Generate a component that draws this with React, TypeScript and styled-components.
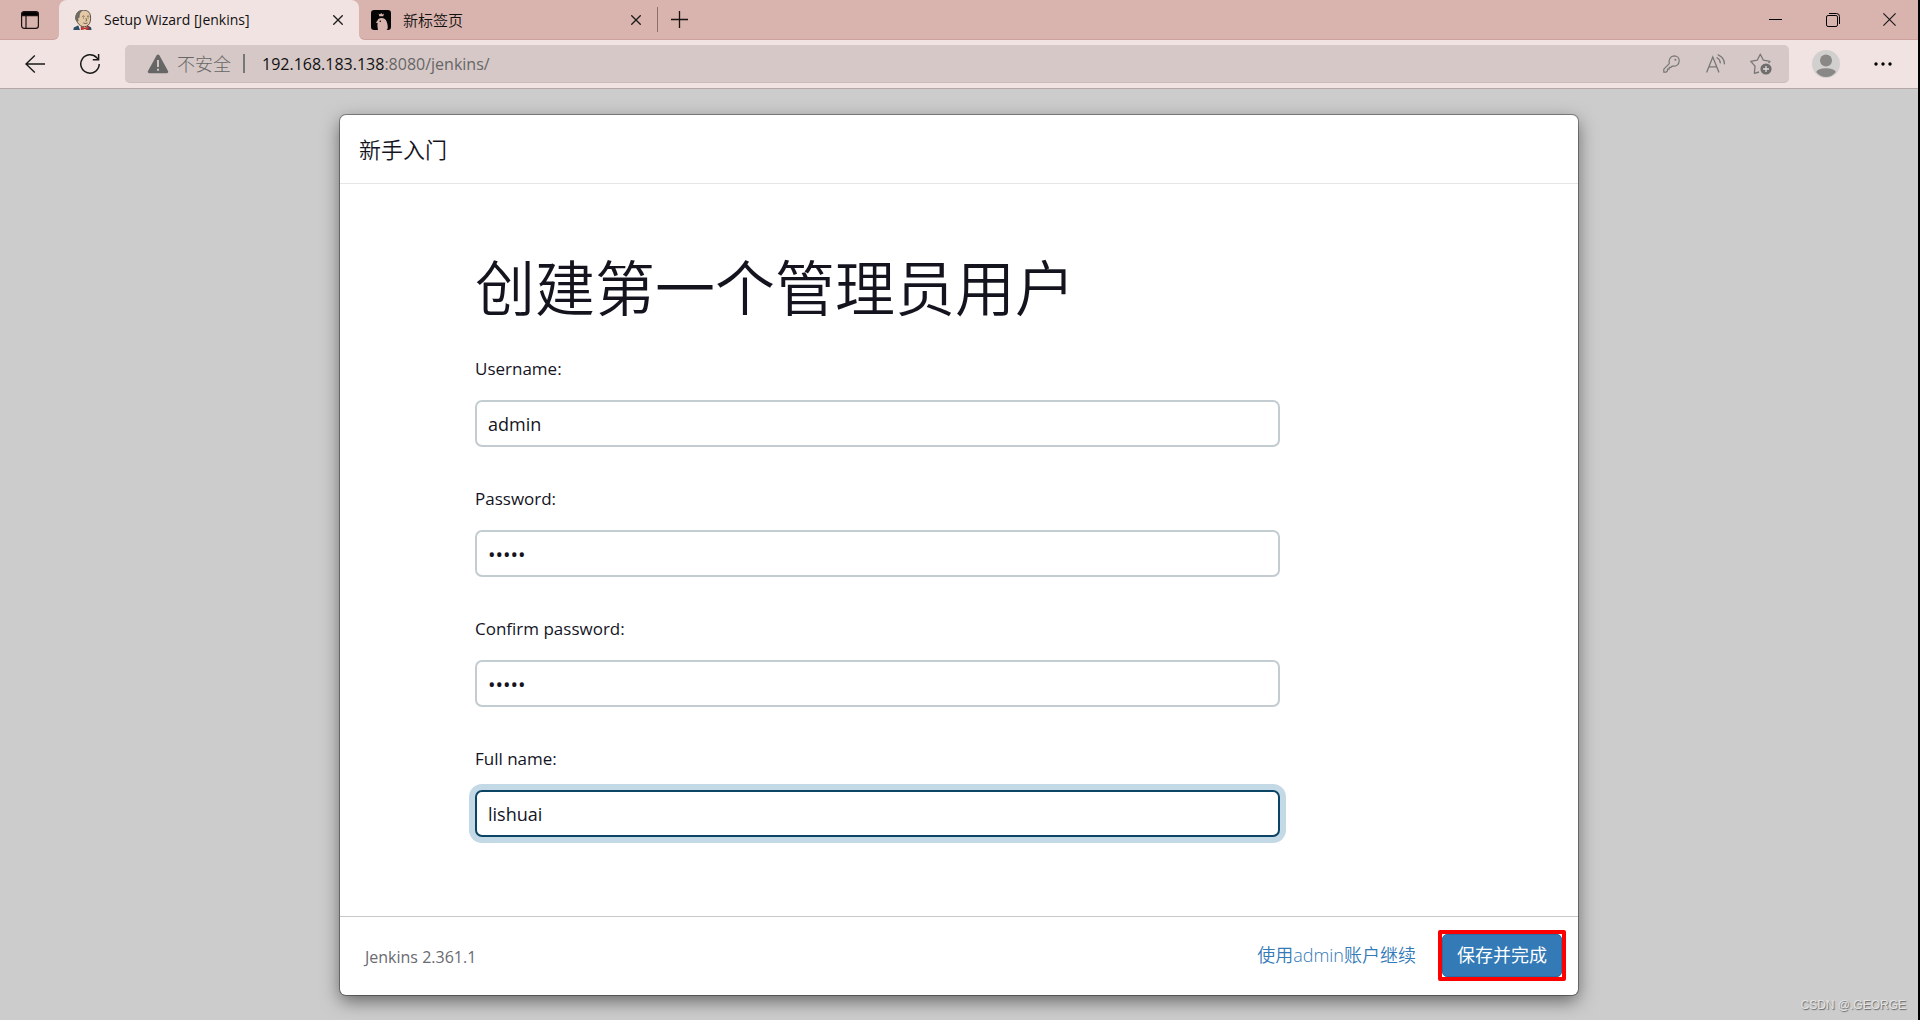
import React from "react";
import styled, { createGlobalStyle } from "styled-components";

const sans = `"Open Sans", "Noto Sans CJK SC", sans-serif`;

const GlobalStyle = createGlobalStyle`
  *, *::before, *::after { box-sizing: border-box; }
  body { margin: 0; background: #cccccc; font-family: ${sans}; color: #14141f; }
  button, input { font-family: inherit; color: inherit; }
  button { padding: 0; border: 0; background: none; cursor: pointer; }
  svg { display: block; flex: none; }
`;

const Window = styled.div`
  position: relative;
  display: flex;
  flex-direction: column;
  min-height: 100vh;
  border-right: 2px solid #000;
`;

/* Tab strip */
const TabStrip = styled.div`
  display: flex;
  height: 40px;
  background: #f1e3e2;
`;

const StripStart = styled.div`
  width: 59px;
  display: flex;
  align-items: center;
  justify-content: center;
  background: #d9b3ad;
  border-bottom: 1px solid #cda29c;
  border-bottom-right-radius: 6px;
`;

const ActiveTabSlot = styled.div`
  width: 300px;
  background: #d9b3ad;
  display: flex;
`;

const Tab = styled.div<{ $active?: boolean }>`
  width: ${(p) => (p.$active ? "300px" : "298px")};
  display: flex;
  align-items: center;
  gap: 12px;
  padding: 0 15px 0 ${(p) => (p.$active ? "14px" : "12px")};
  background: ${(p) => (p.$active ? "#f1e3e2" : "transparent")};
  border-radius: 8px 8px 0 0;
`;

const TabTitle = styled.span<{ $cjk?: boolean }>`
  flex: 1;
  font-size: ${(p) => (p.$cjk ? "15px" : "14px")};
  font-weight: ${(p) => (p.$cjk ? 350 : 400)};
  line-height: 20px;
  color: #111;
  white-space: nowrap;
`;

const IconButton = styled.button<{ $w?: number; $h?: number }>`
  width: ${(p) => p.$w ?? 12}px;
  height: ${(p) => p.$h ?? 20}px;
  display: flex;
  flex: none;
  align-items: center;
  justify-content: center;
`;

const StripRest = styled.div`
  flex: 1;
  display: flex;
  align-items: center;
  background: #d9b3ad;
  border-bottom: 1px solid #cda29c;
  border-bottom-left-radius: 6px;
`;

const StripDivider = styled.span`
  width: 1px;
  height: 25px;
  background: #8f6f6b;
`;

const WindowControls = styled.div`
  display: flex;
  margin-left: auto;
`;

/* Toolbar */
const Toolbar = styled.div`
  display: flex;
  align-items: center;
  height: 49px;
  padding: 0 15px 0 7px;
  background: #f1e3e2;
  border-bottom: 1px solid #b5a7a6;
`;

const AddressBar = styled.div`
  flex: 1;
  display: flex;
  align-items: center;
  height: 38px;
  margin-left: 8px;
  padding: 0 16px 0 22px;
  background: #d6c8c7;
  border-bottom: 1px solid #cbbcbb;
  border-radius: 5px;
`;

const Insecure = styled.span`
  margin-left: 8px;
  padding-right: 12px;
  font-size: 18px;
  font-weight: 300;
  line-height: 24px;
  color: #666;
`;

const AddressDivider = styled.span`
  width: 2px;
  height: 19px;
  margin-right: 17px;
  background: #777;
`;

const Url = styled.span`
  flex: 1;
  font-size: 16px;
  line-height: 24px;
  color: #666;
`;

const Host = styled.span`
  color: #111;
`;

const AddressActions = styled.div`
  display: flex;
  gap: 21px;
`;

/* Setup wizard */
const Backdrop = styled.main`
  flex: 1;
  display: flex;
  justify-content: center;
  padding: 26px 24px 25px;
  background: #cccccc;
`;

const Dialog = styled.form`
  width: 100%;
  max-width: 1238px;
  display: flex;
  flex-direction: column;
  background: #fff;
  border-radius: 6px;
  box-shadow: 0 0 0 1px rgba(0, 0, 0, 0.35), 0 6px 18px rgba(0, 0, 0, 0.5);
`;

const DialogHeader = styled.header`
  padding: 17px 19px;
  border-bottom: 1px solid #e5e5e5;
`;

const DialogTitle = styled.h4`
  margin: 0;
  font-size: 22px;
  font-weight: 350;
  line-height: 34px;
`;

const DialogBody = styled.div`
  flex: 1;
  padding: 64px 135px 0;
`;

const Heading = styled.h1`
  margin: 0 0 26px;
  font-size: 60px;
  font-weight: 350;
  line-height: 80px;
`;

const Field = styled.div`
  max-width: 805px;
  margin-bottom: 37px;
  display: flex;
  flex-direction: column;
  gap: 16px;
`;

const FieldLabel = styled.label`
  font-size: 17px;
  line-height: 30px;
`;

const TextInput = styled.input<{ $focused?: boolean }>`
  width: 100%;
  height: 47px;
  padding: 0 11px;
  font-size: 18px;
  background: #fff;
  border: 2px solid ${(p) => (p.$focused ? "#0b4465" : "#c3ccd1")};
  border-radius: 7px;
  outline: none;
  box-shadow: ${(p) => (p.$focused ? "0 0 0 6px #c3d9e6" : "none")};

  &[type="password"] {
    padding-top: 2px;
    font-size: 20px;
  }
`;

const DialogFooter = styled.footer`
  display: flex;
  align-items: center;
  height: 79px;
  padding: 0 12px 2px 25px;
  border-top: 1px solid #c8c8c8;
`;

const Version = styled.span`
  flex: 1;
  padding-top: 4px;
  font-size: 16px;
  line-height: 24px;
  color: #6a6a72;
`;

const SkipLink = styled.a`
  margin-right: 22px;
  font-size: 18px;
  font-weight: 350;
  line-height: 24px;
  color: #337ab7;
  text-decoration: none;
`;

const Highlight = styled.div`
  border: 4px solid #ff0000;
  border-radius: 2px;
`;

const SaveButton = styled.button`
  display: block;
  width: 120px;
  height: 43px;
  font-size: 18px;
  line-height: 24px;
  color: #fff;
  background: #337ab7;
  border: 1px solid #2e6da4;
  border-radius: 5px;
`;

const Watermark = styled.span`
  position: absolute;
  right: 12px;
  bottom: 7px;
  font-family: "Liberation Sans", sans-serif;
  font-size: 12px;
  line-height: 16px;
  color: #e4e4e4;
  text-shadow: 1px 1px 1px #666;
`;

const CloseIcon = ({ size = 10 }: { size?: number }) => (
  <svg width={size} height={size} viewBox="0 0 10 10" fill="none" stroke="#1a1a1a" strokeWidth={size > 11 ? 0.9 : 1.3}>
    <path d="M0.3 0.3 9.7 9.7M9.7 0.3 0.3 9.7" />
  </svg>
);

const TabMenuIcon = () => (
  <svg width="18" height="18" viewBox="0 0 18 18" fill="none" stroke="#1a1111" strokeWidth="1.2">
    <rect x="0.6" y="0.6" width="16.8" height="16.8" rx="2.6" />
    <path d="M1 1.8Q1.5 1 3 1h12q1.500 0 2 .8V4.600H1z" fill="#000" />
    <path d="M5 5v12" />
  </svg>
);

const ButlerIcon = () => (
  <svg width="19" height="20" viewBox="0 0 19 20">
    <path d="M0.300 20 .8 17.500 5 15.500 14 15.500 18 17.300 18.600 20z" fill="#2b4f66" />
    <path d="M5 14.500 7 20H13.500L14.500 14.500z" fill="#f2efe9" />
    <path d="M3.800 11C2 9.500 2.300 3.600 6 1.300 9.500-.6 15-.2 16.800 3.500 18 6.500 17.900 11 16.500 13.500 15 16.200 12.300 17.200 9.600 16.600 6.500 15.800 5 13.500 3.800 11z" fill="#e3c9a6" stroke="#4a4540" strokeWidth="0.9" />
    <path d="M3.600 11.400C1.500 8.500 2.300 3 6 1.200 7.500.4 9 .2 10.300.4 7 1.700 6.600 4.200 6.700 7.200L5.200 8.200 5.600 11z" fill="#6f6a63" />
    <path d="M9.300 6.500q1.200-.9 2.300-.1M14 6.400q1.200-.8 2.200 0M10 8h1M14.600 8h1M13 8.200l.7 2.500-1.200.4M10.300 13q2 1 4.300 0" stroke="#5c4636" strokeWidth="0.8" fill="none" />
    <path d="M8 16.500 11.800 18 15.800 16V20L11.800 18.900 8 20z" fill="#d33833" stroke="#7d1d1a" strokeWidth="0.4" />
  </svg>
);

const PenguinIcon = () => (
  <svg width="20" height="20" viewBox="0 0 20 20">
    <rect width="20" height="20" rx="3.200" fill="#050505" />
    <path d="M7 20C6.400 17 6.300 14.500 6.600 13L4.600 12.600 6.300 11C6.600 9.200 8.300 8 10.600 8 13.300 8.100 14.800 9.400 15.600 11.400 16.600 14 17 16.500 16.600 19L15.400 20z" fill="#d9b3ad" />
    <path d="M7.600 3.600 9 4.600 10.200 3 11.500 4.600 12.900 3.600 12.300 6.300H8.300z" fill="#d9b3ad" />
    <circle cx="9.300" cy="11.200" r="0.8" fill="#050505" />
  </svg>
);

const PlusIcon = () => (
  <svg width="17" height="17" viewBox="0 0 17 17" stroke="#1a1111" strokeWidth="1.300">
    <path d="M8.500 0v17M0 8.500h17" />
  </svg>
);

const MinimizeIcon = () => (
  <svg width="13" height="13" viewBox="0 0 13 13" stroke="#000">
    <path d="M0 6.500h13" />
  </svg>
);

const RestoreIcon = () => (
  <svg width="14" height="14" viewBox="0 0 14 14" fill="none" stroke="#000">
    <rect x="0.500" y="2.500" width="11" height="11" rx="1.600" />
    <path d="M3 .5h7.500q3 0 3 3V11" />
  </svg>
);

const BackIcon = () => (
  <svg width="20" height="18" viewBox="0 0 20 18" fill="none" stroke="#1a1a1a" strokeWidth="1.400">
    <path d="M20 9H1M9.800.5 1 9l8.800 8.500" />
  </svg>
);

const ReloadIcon = () => (
  <svg width="20" height="20" viewBox="0 0 20 20" fill="none" stroke="#1a1a1a" strokeWidth="1.500">
    <path d="M19.200 10A9.200 9.200 0 1 1 16.800 3.800L18.500 5.500" />
    <path d="M18.600 0V5.700H12.800" />
  </svg>
);

const WarningIcon = () => (
  <svg width="22" height="20" viewBox="0 0 22 20">
    <path d="M9.500 1.500q1.500-2 3 0L21 17q.8 2-1.200 2.200H2.200Q.2 19 1 17z" fill="#666" />
    <path d="M11 6v7M11 14.800v2" stroke="#d6c8c7" strokeWidth="1.900" />
  </svg>
);

const KeyIcon = () => (
  <svg width="17" height="18" viewBox="0 0 17 18" fill="none" stroke="#777" strokeWidth="1.200" strokeLinejoin="round">
    <path d="M6.300 8.600C5.400 4.600 7.500 1 11.200.8 14 .8 16.200 3 16.200 5.800 16.200 9.600 13 11.800 9.300 11L8 12.400H6.200V14.200H4.400V16L3.200 17.200H.8V14.200z" />
    <circle cx="12.400" cy="4.700" r="1" fill="#777" stroke="none" />
  </svg>
);

const ReadAloudIcon = () => (
  <svg width="20" height="19" viewBox="0 0 20 19" fill="none" stroke="#777" strokeWidth="1.300" strokeLinecap="round">
    <path d="M.8 18 6.800 3 12.800 18M3 12.800h7.600M11 3.800q3 1.600 3.300 5M12.200.8q6 2.600 6.200 9" />
  </svg>
);

const FavoriteIcon = () => (
  <svg width="22" height="22" viewBox="0 0 22 22" fill="none" stroke="#777" strokeWidth="1.300" strokeLinejoin="round">
    <path d="M9 19 4.400 20.300 5 13.200.8 8.300 7.200 7.200 10.300 1.200 13.400 7.200 20 8.300 18.500 10" />
    <circle cx="16" cy="16" r="5.600" fill="#6e6e6e" stroke="none" />
    <path d="M16 13v6M13 16h6" stroke="#e3d8d7" />
  </svg>
);

const AvatarIcon = () => (
  <svg width="28" height="28" viewBox="0 0 28 28">
    <circle cx="14" cy="14" r="14" fill="#d2d0ce" />
    <circle cx="14" cy="10.500" r="6" fill="#8a8886" />
    <path d="M4.200 22Q6 18.300 14 18.300T23.800 22Q20 27 14 27T4.200 22z" fill="#8a8886" />
  </svg>
);

const MoreIcon = () => (
  <svg width="18" height="4" viewBox="0 0 18 4" fill="#000">
    <circle cx="2" cy="2" r="1.700" />
    <circle cx="9" cy="2" r="1.700" />
    <circle cx="16" cy="2" r="1.700" />
  </svg>
);

const fields = [
  { id: "username", label: "Username:", type: "text", value: "admin" },
  { id: "password1", label: "Password:", type: "password", value: "admin" },
  { id: "password2", label: "Confirm password:", type: "password", value: "admin" },
  { id: "fullname", label: "Full name:", type: "text", value: "lishuai", focused: true },
];

export default function App() {
  return (
    <>
      <GlobalStyle />
      <Window>
        <TabStrip>
          <StripStart>
            <IconButton $w={32} $h={32} aria-label="Tab actions">
              <TabMenuIcon />
            </IconButton>
          </StripStart>
          <ActiveTabSlot>
            <Tab $active>
              <ButlerIcon />
              <TabTitle>Setup Wizard [Jenkins]</TabTitle>
              <IconButton aria-label="Close tab">
                <CloseIcon />
              </IconButton>
            </Tab>
          </ActiveTabSlot>
          <StripRest>
            <Tab>
              <PenguinIcon />
              <TabTitle $cjk>新标签页</TabTitle>
              <IconButton aria-label="Close tab">
                <CloseIcon />
              </IconButton>
            </Tab>
            <StripDivider />
            <IconButton $w={43} $h={32} aria-label="New tab">
              <PlusIcon />
            </IconButton>
            <WindowControls>
              <IconButton $w={57} $h={38} aria-label="Minimize">
                <MinimizeIcon />
              </IconButton>
              <IconButton $w={57} $h={38} aria-label="Restore">
                <RestoreIcon />
              </IconButton>
              <IconButton $w={57} $h={38} aria-label="Close window">
                <CloseIcon size={13} />
              </IconButton>
            </WindowControls>
          </StripRest>
        </TabStrip>

        <Toolbar>
          <IconButton $w={55} $h={38} aria-label="Back">
            <BackIcon />
          </IconButton>
          <IconButton $w={55} $h={38} aria-label="Reload">
            <ReloadIcon />
          </IconButton>
          <AddressBar>
            <WarningIcon />
            <Insecure>不安全</Insecure>
            <AddressDivider />
            <Url>
              <Host>192.168.183.138</Host>:8080/jenkins/
            </Url>
            <AddressActions>
              <IconButton $w={24} $h={24} aria-label="Passwords">
                <KeyIcon />
              </IconButton>
              <IconButton $w={24} $h={24} aria-label="Read aloud">
                <ReadAloudIcon />
              </IconButton>
              <IconButton $w={24} $h={24} aria-label="Add to favorites">
                <FavoriteIcon />
              </IconButton>
            </AddressActions>
          </AddressBar>
          <IconButton $w={74} $h={38} aria-label="Profile">
            <AvatarIcon />
          </IconButton>
          <IconButton $w={40} $h={38} aria-label="More">
            <MoreIcon />
          </IconButton>
        </Toolbar>

        <Backdrop>
          <Dialog onSubmit={(e) => e.preventDefault()}>
            <DialogHeader>
              <DialogTitle>新手入门</DialogTitle>
            </DialogHeader>
            <DialogBody>
              <Heading>创建第一个管理员用户</Heading>
              {fields.map((f) => (
                <Field key={f.id}>
                  <FieldLabel htmlFor={f.id}>{f.label}</FieldLabel>
                  <TextInput id={f.id} type={f.type} defaultValue={f.value} $focused={f.focused} />
                </Field>
              ))}
            </DialogBody>
            <DialogFooter>
              <Version>Jenkins 2.361.1</Version>
              <SkipLink href="#skip">使用admin账户继续</SkipLink>
              <Highlight>
                <SaveButton type="submit">保存并完成</SaveButton>
              </Highlight>
            </DialogFooter>
          </Dialog>
        </Backdrop>
        <Watermark>CSDN @.GEORGE</Watermark>
      </Window>
    </>
  );
}
